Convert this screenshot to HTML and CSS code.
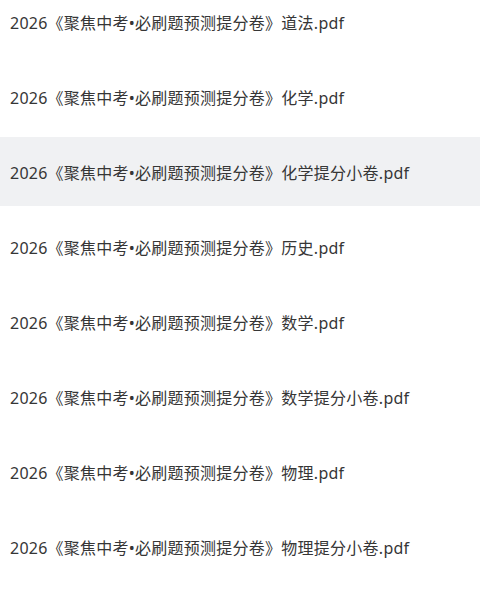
FILE: index.html
```html
<!DOCTYPE html>
<html lang="zh-CN">
<head>
<meta charset="utf-8">
<link rel="stylesheet" href="styles.css">
</head>
<body>
<ul class="files">
  <li class="file">2026《聚焦中考•必刷题预测提分卷》道法.pdf</li>
  <li class="file">2026《聚焦中考•必刷题预测提分卷》化学.pdf</li>
  <li class="file active">2026《聚焦中考•必刷题预测提分卷》化学提分小卷.pdf</li>
  <li class="file">2026《聚焦中考•必刷题预测提分卷》历史.pdf</li>
  <li class="file">2026《聚焦中考•必刷题预测提分卷》数学.pdf</li>
  <li class="file">2026《聚焦中考•必刷题预测提分卷》数学提分小卷.pdf</li>
  <li class="file">2026《聚焦中考•必刷题预测提分卷》物理.pdf</li>
  <li class="file">2026《聚焦中考•必刷题预测提分卷》物理提分小卷.pdf</li>
</ul>
</body>
</html>
```
FILE: styles.css
```css
html, body {
  margin: 0;
  padding: 0;
  background: #ffffff;
  overflow: hidden;
}
.files {
  list-style: none;
  margin: -13px 0 0 0;
  padding: 0;
  display: flex;
  flex-direction: column;
  gap: 6px;
}
.file {
  height: 69px;
  display: flex;
  align-items: center;
  padding-left: 10px;
  font-family: "Noto Sans", "Noto Sans CJK SC", sans-serif;
  font-size: 16px;
  letter-spacing: 0.25px;
  color: #363636;
  white-space: nowrap;
}
.file.active {
  background: #f0f1f3;
}
```
